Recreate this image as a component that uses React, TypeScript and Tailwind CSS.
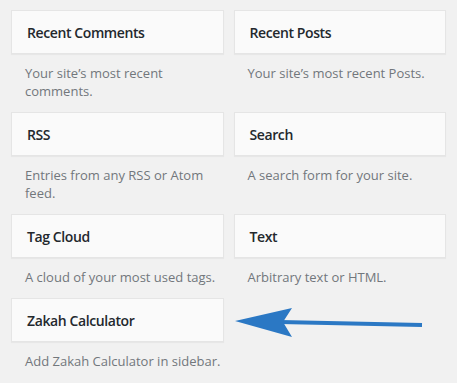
const widgets = [
  { title: "Recent Comments", desc: "Your site’s most recent comments." },
  { title: "Recent Posts", desc: "Your site’s most recent Posts." },
  { title: "RSS", desc: "Entries from any RSS or Atom feed." },
  { title: "Search", desc: "A search form for your site." },
  { title: "Tag Cloud", desc: "A cloud of your most used tags." },
  { title: "Text", desc: "Arbitrary text or HTML." },
  { title: "Zakah Calculator", desc: "Add Zakah Calculator in sidebar." },
];

function WidgetItem({ title, desc }: { title: string; desc: string }) {
  return (
    <div>
      <div className="flex h-[44px] items-center border border-[#e5e5e5] bg-[#fafafa] px-[15px] shadow-[0_1px_1px_rgba(0,0,0,0.04)]">
        <h3 className="text-[14px] font-semibold tracking-[-0.4px] text-[#23282d]">{title}</h3>
      </div>
      <p className="mt-[10px] mb-[12px] pl-[14px] text-[13px] leading-[18px] text-[#72777c]">{desc}</p>
    </div>
  );
}

export default function App() {
  return (
    <div
      className="relative h-[383px] w-[457px] overflow-hidden bg-[#f1f1f1] pt-[10px] pl-[11px] pr-[11px]"
      style={{ fontFamily: '"Open Sans", sans-serif' }}
    >
      <div className="grid grid-cols-2 gap-x-[10px]">
        {widgets.map((w) => (
          <WidgetItem key={w.title} title={w.title} desc={w.desc} />
        ))}
      </div>
      {/* annotation arrow */}
      <svg className="absolute left-0 top-0" width="457" height="383" viewBox="0 0 457 383">
        <line x1="280" y1="322" x2="422" y2="325" stroke="#2b78c4" strokeWidth="4" />
        <path d="M235 321 L292 308 L283 322 L292 337 Z" fill="#2b78c4" />
      </svg>
    </div>
  );
}
